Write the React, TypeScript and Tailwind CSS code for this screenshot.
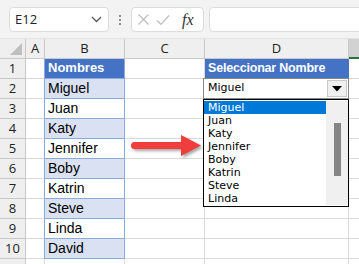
import React from 'react';

const names = ['Miguel', 'Juan', 'Katy', 'Jennifer', 'Boby', 'Katrin', 'Steve', 'Linda', 'David'];
const listItems = ['Miguel', 'Juan', 'Katy', 'Jennifer', 'Boby', 'Katrin', 'Steve', 'Linda'];

const uiFont = "font-['Open_Sans',sans-serif]";
const cellFont = "font-['Liberation_Sans',Arial,sans-serif]";

function FormulaBar() {
  return (
    <div className="flex h-[39px] items-start bg-[#f3f3f3] pt-[7px] pl-[9px] border-b border-[#e3e3e3]">
      <div className="flex h-[25px] w-[100px] items-center justify-between rounded-[4px] border border-[#dcdcdc] bg-white pl-[5px] pr-[6px]">
        <span className={`${uiFont} text-[13px] text-[#222]`}>E12</span>
        <svg width="11" height="7" viewBox="0 0 11 7" fill="none">
          <path d="M1 1l4.5 4.5L10 1" stroke="#555" strokeWidth="1.3" />
        </svg>
      </div>
      <div className="flex h-[25px] w-[22px] flex-col items-center justify-center gap-[2px]">
        <span className="h-[2px] w-[2px] bg-[#8a8a8a]" />
        <span className="h-[2px] w-[2px] bg-[#8a8a8a]" />
        <span className="h-[2px] w-[2px] bg-[#8a8a8a]" />
      </div>
      <div className="flex h-[25px] w-[73px] items-center rounded-[4px] border border-[#dcdcdc] bg-white pl-[5px]">
        <svg width="13" height="13" viewBox="0 0 13 13" fill="none">
          <path d="M1.5 1.5l10 10M11.5 1.5l-10 10" stroke="#bdbdbd" strokeWidth="1.2" />
        </svg>
        <svg width="14" height="12" viewBox="0 0 14 12" fill="none" className="ml-[6px]">
          <path d="M1 6.5l4 4L13 1.5" stroke="#bdbdbd" strokeWidth="1.2" />
        </svg>
        <span className="ml-[12px] font-['Liberation_Serif',serif] text-[16px] italic leading-none text-[#333]">fx</span>
      </div>
      <div className="ml-[5px] h-[25px] flex-1 -mr-[8px] rounded-[4px] border border-[#dcdcdc] bg-white" />
    </div>
  );
}

function HeaderRow() {
  const hdr = `${uiFont} flex items-center justify-center text-[13px] text-[#222] bg-[#efefef] border-b border-[#c8c8c8]`;
  return (
    <>
      <div className="relative h-[20px] border-r border-b border-[#c8c8c8] bg-[#efefef]">
        <svg width="13" height="13" viewBox="0 0 13 13" className="absolute left-[10px] top-[4px]">
          <path d="M12 0V12H0Z" fill="#bfbfbf" />
        </svg>
      </div>
      <div className={hdr}>A</div>
      <div className={`${hdr} border-l border-r`}>B</div>
      <div className={`${hdr} border-r`}>C</div>
      <div className={`${hdr} border-r`}>D</div>
      <div className="h-[20px] bg-[#d2d2d2] border-b-2 border-[#217346]" />
    </>
  );
}

function BodyRow({ n }: { n: number }) {
  const name = n === 1 ? 'Nombres' : names[n - 2];
  const inTable = n <= 10;
  const shaded = inTable && n % 2 === 0;
  const grid = 'border-[#dadada]';
  let bCls = `border-l border-r border-b text-[14px] ${grid}`;
  if (n === 1) bCls = 'border-l border-r border-b border-[#8eaadb] bg-[#4472c4] text-white text-[13px] font-bold';
  else if (inTable) bCls = `border-l border-r border-b border-[#8eaadb] text-[14px] text-black ${shaded ? 'bg-[#d9e1f2]' : 'bg-white'}`;
  return (
    <>
      <div className={`${uiFont} flex h-[20px] items-center justify-center border-r border-b border-[#c8c8c8] bg-[#efefef] text-[13px] text-[#222]`}>
        {n <= 10 ? n : ''}
      </div>
      <div className={`border-b ${grid}`} />
      <div className={`${cellFont} flex items-end pl-[3px] pb-[1px] leading-[18px] ${bCls}`}>
        {inTable ? name : ''}
      </div>
      <div className={`border-r border-b ${grid}`} />
      {n === 1 ? (
        <div className={`${cellFont} flex items-end border-r border-b border-[#4472c4] bg-[#4472c4] pl-[3px] pb-[1px] text-[12.5px] font-bold leading-[18px] tracking-[-0.2px] text-white`}>
          Seleccionar Nombre
        </div>
      ) : (
        <div className={`border-r border-b ${grid}`} />
      )}
      <div className={`border-b ${grid}`} />
    </>
  );
}

function DropDown() {
  const listFont = "font-['DejaVu_Sans',Tahoma,sans-serif] text-[11px]";
  return (
    <>
      <div className="absolute left-[203px] top-[78px] flex h-[21px] w-[146px] items-center border border-[#8a8a8a] bg-white">
        <span className={`${listFont} ml-[4px] flex-1 text-black`}>Miguel</span>
        <div className="mr-[1px] flex h-[17px] w-[20px] items-center justify-center border border-[#c9c9c9] bg-[#f0f0f0]">
          <svg width="10" height="6" viewBox="0 0 10 6">
            <path d="M0 0H10L5 5.5Z" fill="#000" />
          </svg>
        </div>
      </div>
      <div className="absolute left-[203px] top-[99px] flex h-[108px] w-[146px] border border-black bg-white py-[1px]">
        <div className="flex w-[122px] flex-col">
          {listItems.map((item, i) => (
            <div
              key={item}
              className={`${listFont} h-[13px] pl-[4px] leading-[13px] ${i === 0 ? 'bg-[#0078d7] text-white' : 'text-black'}`}
            >
              {item}
            </div>
          ))}
        </div>
        <div className="flex flex-1 justify-center bg-[#f0f0f0] pt-[22px]">
          <div className="h-[53px] w-[7px] bg-[#858585]" />
        </div>
      </div>
    </>
  );
}

function RedArrow() {
  return (
    <svg
      width="78"
      height="30"
      viewBox="0 0 78 30"
      className="absolute left-[128px] top-[131px] drop-shadow-[2px_2px_1.5px_rgba(0,0,0,0.35)]"
    >
      <path d="M6.5 11H53V4L73 14.5L53 25V18H6.5A3.5 3.5 0 0 1 6.5 11Z" fill="#f23d3d" />
    </svg>
  );
}

export default function App() {
  const rows = Array.from({ length: 11 }, (_, i) => i + 1);
  return (
    <div className="relative h-[264px] w-[359px] overflow-hidden bg-white">
      <FormulaBar />
      <div className="grid grid-cols-[26px_18px_81px_80px_144px_1fr] auto-rows-[20px]">
        <HeaderRow />
        {rows.map((n) => (
          <BodyRow key={n} n={n} />
        ))}
      </div>
      <DropDown />
      <RedArrow />
    </div>
  );
}
